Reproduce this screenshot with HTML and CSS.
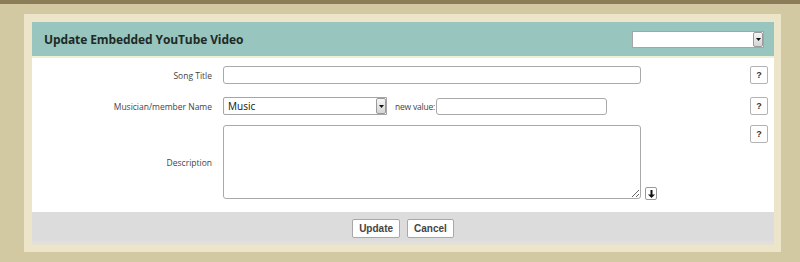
FILE: index.html
```html
<!DOCTYPE html>
<html lang="en">
<head>
  <meta charset="UTF-8">
  <title>Update Embedded YouTube Video</title>
  <link rel="stylesheet" href="styles.css">
</head>
<body>
  <div class="panel">
    <div class="panel-head">
      <h2>Update Embedded YouTube Video</h2>
      <span class="pick pick-head">
        <select><option></option></select>
        <span class="pick-arrow"><svg width="5" height="3" viewBox="0 0 5 3"><path d="M0 0h5L2.5 3z" fill="#111"/></svg></span>
      </span>
    </div>

    <div class="panel-body">
      <div class="row">
        <label class="row-label">Song Title</label>
        <div class="row-field">
          <input type="text" class="txt txt-wide">
        </div>
        <button class="help">?</button>
      </div>

      <div class="row row-member">
        <label class="row-label">Musician/member Name</label>
        <div class="row-field">
          <span class="pick pick-member">
            <select><option>Music</option></select>
            <span class="pick-arrow"><svg width="5" height="3" viewBox="0 0 5 3"><path d="M0 0h5L2.5 3z" fill="#111"/></svg></span>
          </span>
          <span class="new-label">new value:</span>
          <input type="text" class="txt txt-new">
        </div>
        <button class="help">?</button>
      </div>

      <div class="row row-desc">
        <label class="row-label">Description</label>
        <div class="row-field">
          <textarea class="txt txt-area"></textarea>
          <button class="grow"><svg width="7" height="8" viewBox="0 0 7 8"><path d="M2.5 0h2v4.5H7L3.5 8 0 4.5h2.5z" fill="#111"/></svg></button>
        </div>
        <button class="help">?</button>
      </div>
    </div>

    <div class="panel-foot">
      <button class="btn">Update</button>
      <button class="btn">Cancel</button>
    </div>
  </div>
</body>
</html>
```

FILE: styles.css
```css
html, body {
  margin: 0;
  padding: 0;
}
body {
  background: #d2c9a3;
  border-top: 4px solid #8c7d59;
  font-family: "Open Sans", sans-serif;
  color: #333;
  height: 258px;
  overflow: hidden;
}
.panel {
  margin: 10px 19px 0 24px;
  padding: 8px 7px 7px 8px;
  background: #ede5c9;
}
.panel-head {
  display: flex;
  justify-content: space-between;
  align-items: center;
  height: 34px;
  padding: 0 10px 0 12px;
  background: #98c5bd;
  border-bottom: 2px solid #eef0d6;
}
.panel-head h2 {
  margin: 0;
  font-size: 12px;
  font-weight: bold;
  color: #1e2a28;
  letter-spacing: -0.1px;
}
.pick {
  position: relative;
  display: block;
}
.pick select {
  display: block;
  appearance: none;
  -webkit-appearance: none;
  margin: 0;
  padding: 0 4px;
  border: 1px solid #a5a5a5;
  border-radius: 0;
  background: #fff;
  font-family: "Open Sans", sans-serif;
  font-size: 10px;
  color: #111;
}
.pick-head select {
  width: 132px;
  height: 17px;
}
.pick-member select {
  width: 164px;
  height: 18px;
  border-radius: 2px 0 0 2px;
}
.pick-arrow {
  position: absolute;
  top: 1px;
  right: 1px;
  bottom: 1px;
  width: 10px;
  display: flex;
  align-items: center;
  justify-content: center;
  background: linear-gradient(#f6f6f6, #d4d4d4);
  border: 1px solid #9a9a9a;
  border-radius: 2px;
  box-sizing: border-box;
}
.panel-body {
  background: #fff;
  padding: 8px 6px 13px 0;
}
.row {
  display: flex;
  align-items: center;
  margin-bottom: 13px;
}
.row-member {
  margin-bottom: 10px;
}
.row:last-child {
  margin-bottom: 0;
}
.row-desc {
  align-items: stretch;
}
.row-label {
  width: 180px;
  margin-right: 11px;
  text-align: right;
  font-size: 8.5px;
  color: #444;
}
.row-desc .row-label {
  align-self: center;
}
.row-field {
  flex: 1;
  display: flex;
  align-items: center;
}
.row-desc .row-field {
  align-items: flex-end;
}
.txt {
  box-sizing: border-box;
  display: block;
  margin: 0;
  border: 1px solid #a9a9a9;
  border-radius: 3px;
  background: #fff;
  font-family: "Open Sans", sans-serif;
}
.txt-wide {
  width: 418px;
  height: 18px;
}
.txt-new {
  width: 171px;
  height: 17px;
}
.txt-area {
  width: 418px;
  height: 74px;
  resize: vertical;
}
.new-label {
  margin: 0 1px 0 8px;
  font-size: 8.5px;
  color: #444;
  letter-spacing: -0.2px;
}
.grow {
  width: 12px;
  height: 13px;
  margin: 0 0 -1px 4px;
  padding: 0;
  display: flex;
  align-items: center;
  justify-content: center;
  background: #fff;
  border: 1px solid #999;
  border-radius: 2px;
}
.help {
  width: 18px;
  height: 18px;
  padding: 0;
  background: #fff;
  border: 1px solid #b3b3b3;
  border-radius: 2px;
  font-family: "Liberation Sans", sans-serif;
  font-size: 9px;
  font-weight: bold;
  color: #333;
}
.row-desc .help {
  align-self: flex-start;
}
.panel-foot {
  display: flex;
  justify-content: center;
  gap: 7px;
  height: 33px;
  align-items: center;
  background: linear-gradient(#dcdcdc 85%, #e6e2d2);
}
.btn {
  height: 19px;
  padding: 0 6px;
  background: #fff;
  border: 1px solid #a8a8a8;
  border-radius: 2px;
  font-family: "Liberation Sans", sans-serif;
  font-size: 10px;
  font-weight: bold;
  color: #444;
}
```
